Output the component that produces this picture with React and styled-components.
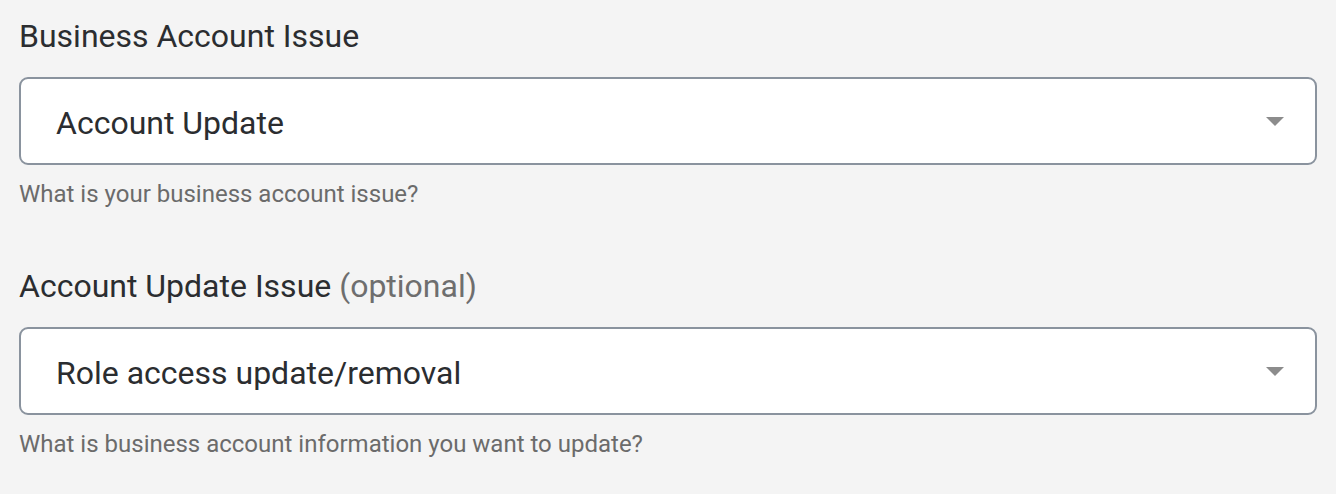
import styled, { createGlobalStyle } from "styled-components";

const GlobalStyle = createGlobalStyle`
  body {
    margin: 0;
    background: #f4f4f4;
    font-family: Roboto, "Noto Sans", sans-serif;
  }
`;

const Form = styled.div`
  display: flex;
  flex-direction: column;
  gap: 58px;
  padding: 16px 19px 0 19px;
`;

const Field = styled.div`
  display: flex;
  flex-direction: column;
`;

const Label = styled.label`
  font-size: 32px;
  line-height: 40px;
  color: #2b2d30;
  margin-bottom: 21px;
`;

const Optional = styled.span`
  color: #6e6e6e;
`;

const SelectBox = styled.div`
  display: flex;
  align-items: center;
  justify-content: space-between;
  box-sizing: border-box;
  height: 88px;
  background: #fff;
  border: 2px solid #8a939e;
  border-radius: 9px;
  padding: 3px 31px 0 35px;
`;

const Value = styled.span`
  font-size: 32px;
  color: #2b2d30;
`;

const Caret = styled.span`
  width: 0;
  height: 0;
  margin-bottom: 3px;
  border-left: 9px solid transparent;
  border-right: 9px solid transparent;
  border-top: 9px solid #8c8c8c;
`;

const Helper = styled.div`
  margin-top: 15px;
  font-size: 24px;
  line-height: 28px;
  color: #6b6b6b;
`;

const fields = [
  {
    label: "Business Account Issue",
    value: "Account Update",
    helper: "What is your business account issue?",
  },
  {
    label: "Account Update Issue",
    optional: true,
    value: "Role access update/removal",
    helper: "What is business account information you want to update?",
  },
];

const App = () => (
  <>
    <GlobalStyle />
    <Form>
      {fields.map((f) => (
        <Field key={f.label}>
          <Label>
            {f.label}
            {f.optional && <Optional> (optional)</Optional>}
          </Label>
          <SelectBox>
            <Value>{f.value}</Value>
            <Caret />
          </SelectBox>
          <Helper>{f.helper}</Helper>
        </Field>
      ))}
    </Form>
  </>
);

export default App;
